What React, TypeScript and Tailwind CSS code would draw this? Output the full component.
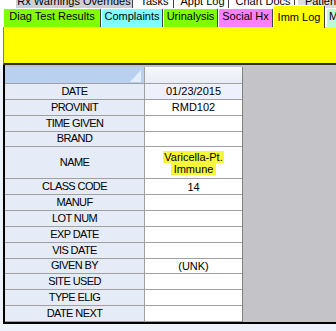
import React from "react";

const backTabs = [
  { label: "Rx Warnings Overrides", w: "w-[118px]", bg: "bg-[#d0cfd4]" },
  { label: "Tasks", w: "w-[39px]", bg: "bg-white" },
  { label: "Appt Log", w: "w-[53px]", bg: "bg-white" },
  { label: "Chart Docs", w: "w-[64px]", bg: "bg-white" },
  { label: "Patient", w: "w-[50px]", bg: "bg-[#dcdce0]" },
];

const frontTabs = [
  { label: "Diag Test Results", w: "w-[98px]", bg: "bg-[#80ff00]" },
  { label: "Complaints", w: "w-[62px]", bg: "bg-[#80ffff]" },
  { label: "Urinalysis", w: "w-[55px]", bg: "bg-[#80ff00]" },
  { label: "Social Hx", w: "w-[55px]", bg: "bg-[#ff80ff]" },
];

const rows: { label: string; value?: string; tall?: boolean; active?: boolean }[] = [
  { label: "DATE", value: "01/23/2015", active: true },
  { label: "PROVINIT", value: "RMD102" },
  { label: "TIME GIVEN" },
  { label: "BRAND" },
  { label: "NAME", tall: true },
  { label: "CLASS CODE", value: "14" },
  { label: "MANUF" },
  { label: "LOT NUM" },
  { label: "EXP DATE" },
  { label: "VIS DATE" },
  { label: "GIVEN BY", value: "(UNK)" },
  { label: "SITE USED" },
  { label: "TYPE ELIG" },
  { label: "DATE NEXT" },
];

export default function App() {
  return (
    <div className="w-[336px] h-[331px] overflow-hidden bg-white text-black text-[11px] font-['Liberation_Sans',Arial,sans-serif]">
      {/* back tab row, cut off at the top */}
      <div className="flex h-[8px] overflow-hidden pl-[15px] gap-[2px]">
        {backTabs.map((t) => (
          <div
            key={t.label}
            className={`${t.w} ${t.bg} shrink-0 h-[8px] border-l border-l-white border-r border-r-[#404040] flex items-end justify-center overflow-hidden`}
          >
            <span className="leading-[13px] shrink-0 whitespace-nowrap">{t.label}</span>
          </div>
        ))}
      </div>

      {/* front tab row */}
      <div className="flex items-end h-[19px] pl-[3px]">
        {frontTabs.map((t) => (
          <div
            key={t.label}
            className={`${t.w} ${t.bg} shrink-0 h-[19px] border-l border-t border-r border-l-white border-t-white border-r-[#404040] rounded-t-[2px] flex justify-center pt-[1px] leading-[13px] whitespace-nowrap`}
          >
            {t.label}
          </div>
        ))}
        <div className="w-[52px] shrink-0 h-[23px] -mb-[1px] bg-[#ffff00] border-l border-t border-r border-l-white border-t-white border-r-[#404040] rounded-t-[2px] flex justify-center pt-[5px] leading-[13px] whitespace-nowrap relative">
          Imm Log
        </div>
        <div className="w-[20px] shrink-0 h-[19px] ml-[1px] bg-[#c0f8d8] border-l border-t border-l-white border-t-white rounded-t-[2px] pl-[2px] pt-[1px] leading-[13px] overflow-hidden whitespace-nowrap">
          M
        </div>
      </div>

      {/* yellow panel */}
      <div className="ml-[3px] h-[38px] bg-[#ffff00] border-l border-l-[#808080] border-b-2 border-b-[#303030]" />

      {/* grid */}
      <div className="bg-[#eef2fb] h-[266px]">
        <div className="ml-[3px] h-[259px] pt-[2px] bg-[#c4c3c8] border-l-2 border-l-black border-b-2 border-b-black flex">
          <div className="w-[238px] bg-white border-r border-r-[#808080] flex flex-col">
            <div className="flex h-[17px] border-b border-b-[#a0a0a0]">
              <div className="w-[140px] bg-[#b9d1ef] border-r border-r-[#a0a0a0] flex items-end justify-end pr-[3px] pb-[1px]">
                <svg width="11" height="12" viewBox="0 0 11 12">
                  <polygon points="11,0 11,12 0,12" fill="#e4edf9" />
                </svg>
              </div>
              <div className="flex-1 bg-gradient-to-b from-[#f7f8fc] to-[#e8ecf4]" />
            </div>
            {rows.map((r) => (
              <div
                key={r.label}
                className={`flex border-b border-b-[#a0a0a0] ${r.tall ? "h-[32px]" : "h-[16px]"}`}
              >
                <div className="w-[140px] bg-[#e5ebf7] border-r border-r-[#a0a0a0] flex items-center justify-center leading-[13px] tracking-[-0.6px]">
                  {r.label}
                </div>
                <div
                  className={`flex-1 flex flex-col items-center justify-center leading-[12px] ${r.active ? "bg-[#eef0fb]" : "bg-white"}`}
                >
                  {r.tall ? (
                    <>
                      <span className="bg-[#f6f63a] px-[1px] leading-[12px]">Varicella-Pt.</span>
                      <span className="bg-[#f6f63a] px-[3px] leading-[12px]">Immune</span>
                    </>
                  ) : (
                    r.value
                  )}
                </div>
              </div>
            ))}
          </div>
        </div>
      </div>
    </div>
  );
}
